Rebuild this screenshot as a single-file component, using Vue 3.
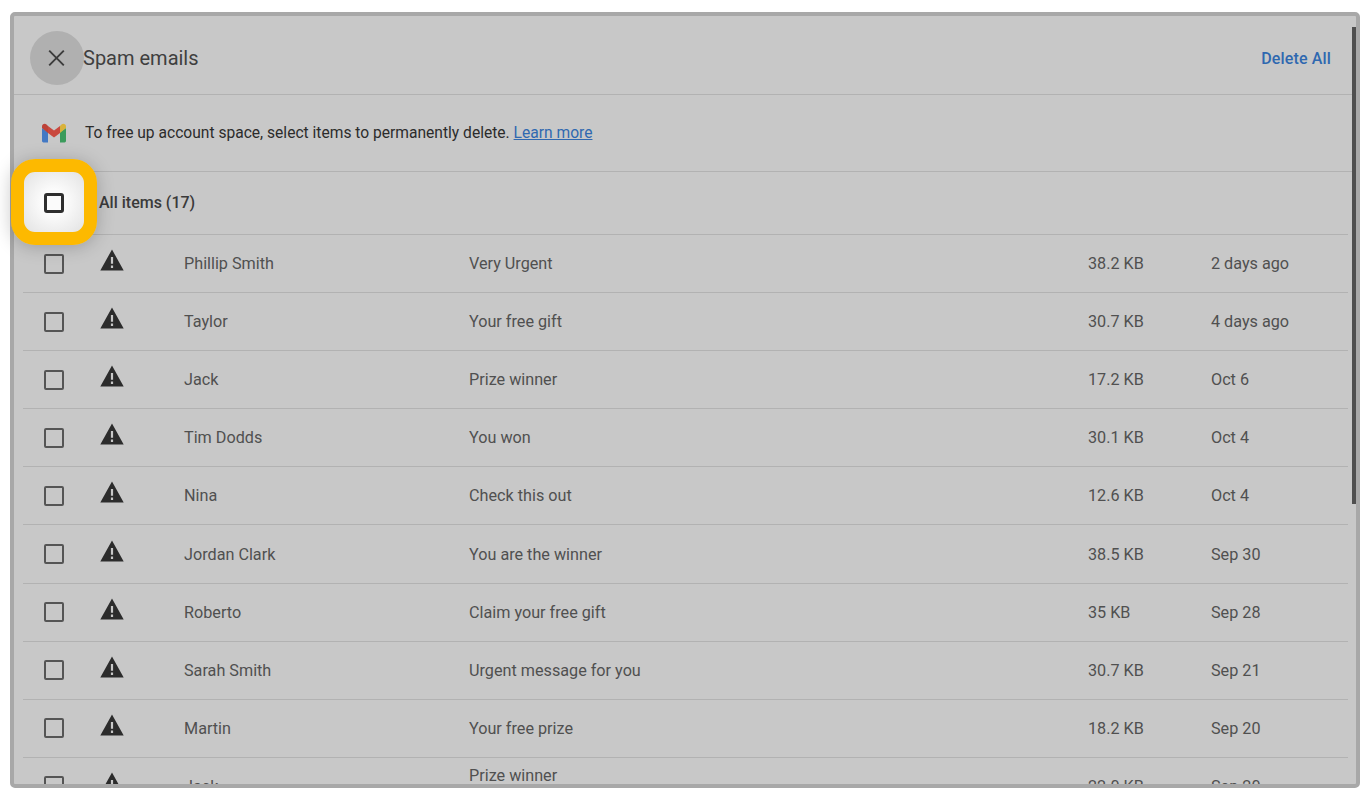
<script setup>
const rows = [
  ['Phillip Smith', 'Very Urgent', '38.2 KB', '2 days ago'],
  ['Taylor', 'Your free gift', '30.7 KB', '4 days ago'],
  ['Jack', 'Prize winner', '17.2 KB', 'Oct 6'],
  ['Tim Dodds', 'You won', '30.1 KB', 'Oct 4'],
  ['Nina', 'Check this out', '12.6 KB', 'Oct 4'],
  ['Jordan Clark', 'You are the winner', '38.5 KB', 'Sep 30'],
  ['Roberto', 'Claim your free gift', '35 KB', 'Sep 28'],
  ['Sarah Smith', 'Urgent message for you', '30.7 KB', 'Sep 21'],
  ['Martin', 'Your free prize', '18.2 KB', 'Sep 20'],
  ['Jack', 'Prize winner', '22.0 KB', 'Sep 20']
]
</script>

<template>
  <div class="page">
    <div class="frame">
      <div class="panel">
        <header class="head">
          <div class="close">
            <svg width="24" height="24" viewBox="0 0 24 24"><path d="M4.200 4.700l14.600 14.600M18.800 4.700L4.200 19.300" stroke="#3c3c3c" stroke-width="1.900" fill="none"/></svg>
          </div>
          <h1 class="title">Spam emails</h1>
          <a class="del">Delete All</a>
        </header>
        <div class="banner">
          <svg class="gm" width="26" height="20" viewBox="0 0 26 20">
            <path d="M1 5v13a1.400 1.400 0 0 0 1.400 1.400H7V9z" fill="#4379c4"/>
            <path d="M19 9v10.400h4.600A1.400 1.400 0 0 0 25 18V5z" fill="#3b9b5c"/>
            <path d="M19 3v7l6-5V3.500C25 1 22.300 0 20.500 1.400z" fill="#d9b23a"/>
            <path d="M7 10V3l6 4.600L19 3v7l-6 4.600z" fill="#c9483e"/>
            <path d="M1 3.500V5l6 5V3L5.500 1.400C3.700 0 1 1 1 3.500z" fill="#bd4238"/>
          </svg>
          <span class="bt">To free up account space, select items to permanently delete. <a class="lm">Learn more</a></span>
        </div>
        <div class="all">
          <span class="allcell"></span>
          <span class="alltxt">All items (17)</span>
        </div>
        <div class="list">
          <div v-for="(r, i) in rows" :key="i" class="row">
            <span class="cb"></span>
            <svg class="warn" width="28" height="28" viewBox="0 0 28 28"><path d="M14 3.500L25.700 24.500H2.300zM12.900 11v6.800h2.200V11zM12.900 19.600v2.300h2.200v-2.300z" fill="#2c2c2c" fill-rule="evenodd"/></svg>
            <span class="from">{{ r[0] }}</span>
            <span class="subj" :class="{ raised: i === rows.length - 1 }">{{ r[1] }}</span>
            <span class="size">{{ r[2] }}</span>
            <span class="date">{{ r[3] }}</span>
          </div>
        </div>
        <div class="bar"></div>
      </div>
      <div class="spot"><span class="spotcb"></span></div>
    </div>
  </div>
</template>

<style scoped>
.page {
  width: 1370px;
  height: 800px;
  background: #fff;
  padding: 12px 10px 12px;
  box-sizing: border-box;
  font-family: Roboto, "Liberation Sans", sans-serif;
  overflow: hidden;
}
.frame {
  position: relative;
  width: 1350px;
  height: 776px;
  box-sizing: border-box;
  border: 4px solid #a8a8a8;
  border-radius: 5px;
  background: #c8c8c8;
}
.panel {
  position: relative;
  height: 100%;
  overflow: hidden;
}
.head {
  height: 79px;
  box-sizing: border-box;
  border-bottom: 1px solid #b2b2b2;
  display: flex;
  align-items: center;
  padding: 6px 25px 0 16px;
}
.close {
  width: 54px;
  height: 54px;
  border-radius: 50%;
  background: #b0b0b0;
  display: flex;
  align-items: center;
  justify-content: center;
  flex: none;
}
.title {
  margin: 0 0 0 -1px;
  font-size: 20px;
  font-weight: 400;
  color: #3f3f3f;
  flex: 1;
}
.del {
  font-size: 16px;
  font-weight: 500;
  color: #2f68b0;
  letter-spacing: 0.15px;
}
.banner {
  height: 77px;
  box-sizing: border-box;
  border-bottom: 1px solid #b2b2b2;
  display: flex;
  align-items: center;
  padding-left: 27px;
  gap: 18px;
}
.gm { flex: none; }
.bt {
  font-size: 15.6px;
  color: #2c2c2c;
}
.lm {
  color: #2f68b0;
  text-decoration: underline;
}
.all {
  height: 63px;
  margin: 0 8px 0 9px;
  padding-bottom: 1px;
  box-sizing: border-box;
  border-bottom: 1px solid #b2b2b2;
  display: flex;
  align-items: center;
}
.allcell { width: 76px; flex: none; }
.alltxt {
  font-size: 16px;
  font-weight: 500;
  color: #3a3a3a;
}
.list { margin: 0 8px 0 9px; }
.row {
  height: 58.1px;
  box-sizing: border-box;
  border-bottom: 1px solid #b2b2b2;
  display: flex;
  align-items: center;
  font-size: 16.2px;
  color: #505050;
}
.cb {
  width: 20px;
  height: 20px;
  box-sizing: border-box;
  border: 2px solid #555;
  border-radius: 2px;
  margin-left: 21px;
  flex: none;
}
.warn { margin-left: 34px; margin-top: -7px; flex: none; }
.from { margin-left: 58px; width: 285px; flex: none; }
.subj { width: 619px; flex: none; }
.raised { margin-bottom: 22px; }
.size { width: 123px; flex: none; }
.date { flex: none; }
.bar {
  position: absolute;
  right: 0;
  top: 11px;
  width: 4px;
  height: 477px;
  background: #4f4f4f;
}
.spot {
  position: absolute;
  left: -3px;
  top: 143px;
  width: 86px;
  height: 86px;
  box-sizing: border-box;
  border: 13px solid #fdb900;
  border-radius: 24px;
  background: radial-gradient(circle, #fbfbfb 30%, #e2e2e2 100%);
  box-shadow: 0 2px 18px rgba(0, 0, 0, 0.22);
  display: flex;
  align-items: center;
  justify-content: center;
  padding-top: 1px;
}
.spotcb {
  width: 20px;
  height: 20px;
  box-sizing: border-box;
  border: 3px solid #2e2e2e;
  border-radius: 3px;
}
</style>
